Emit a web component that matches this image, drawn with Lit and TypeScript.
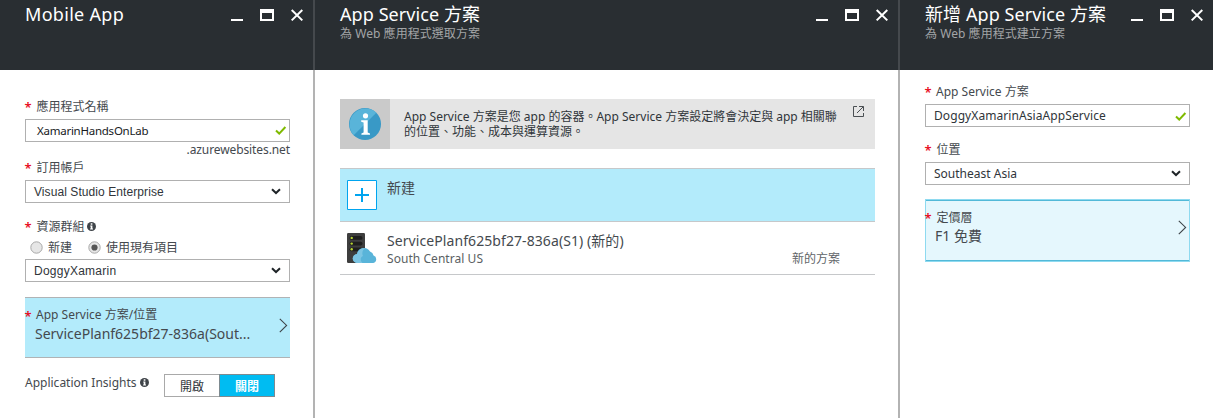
import { LitElement, html, css, svg } from "lit";
import { customElement, property } from "lit/decorators.js";

const shared = css`
  * { box-sizing: border-box; }
  svg { display: block; flex: none; }
`;

const infoDot = html`<svg class="dot" width="9" height="9" viewBox="0 0 9 9">
  <circle cx="4.5" cy="4.5" r="4.5" fill="#3f4449" />
  <path d="M3.7 1.3h1.7v1.5H3.7zM3.2 3.6h2.2v3h.6v.9H3.1v-.9h.6V4.5h-.5z" fill="#fff" />
</svg>`;
const check = html`<svg class="check" width="12" height="9" viewBox="0 0 12 9">
  <path d="M1 4.6 4.2 7.6 10.4 1" fill="none" stroke="#7fba00" stroke-width="2" />
</svg>`;
const caret = html`<svg width="10" height="7" viewBox="0 0 10 7">
  <path d="M1 1.2 5 5 9 1.2" fill="none" stroke="#1f2428" stroke-width="2" />
</svg>`;
const chevron = html`<svg class="chev" width="9" height="15" viewBox="0 0 9 15">
  <path d="M.8.8 7.6 7.4.8 14.1" fill="none" stroke="#3d4449" stroke-width="1.1" />
</svg>`;

@customElement("az-blade")
class AzBlade extends LitElement {
  @property() heading = "";
  @property() sub = "";
  static styles = [shared, css`
    :host { display: flex; flex-direction: column; height: 418px; min-width: 0; }
    .head { height: 70px; flex: none; background: #292e32; color: #fff; display: flex; padding-left: 25px; }
    .titles { flex: 1; white-space: nowrap; padding-top: 2px; }
    .title { font-size: 18px; line-height: 24px; height: 24px; letter-spacing: var(--title-spacing, 0.08px); }
    .sub { font-size: 12px; line-height: 16px; height: 16px; color: #a3a5a7; letter-spacing: 0.05px; }
    .body { padding: 0 23px 0 25px; display: flex; flex-direction: column; }
  `];
  render() {
    return html`
      <div class="head">
        <div class="titles">
          <div class="title">${this.heading}</div>
          <div class="sub">${this.sub}</div>
        </div>
        <svg width="83" height="70" viewBox="0 0 83 70" shape-rendering="crispEdges">
          <path d="M1 19h12v2H1z" fill="#fff" />
          <path d="M30 9h14v12H30zM32 13v6h10v-6z" fill="#fff" fill-rule="evenodd" />
          <path d="M61.7 10 72.3 20.4M72.3 10 61.7 20.4" stroke="#fff" stroke-width="2" shape-rendering="auto" />
        </svg>
      </div>
      <div class="body"><slot></slot></div>
    `;
  }
}

@customElement("app-root")
class AppRoot extends LitElement {
  static styles = [shared, css`
    :host {
      display: block; width: 1213px; height: 418px; overflow: hidden; background: #fff;
      font-family: "Noto Sans", "Noto Sans CJK TC", sans-serif; font-size: 12px; color: #44494e;
    }
    .page { display: grid; grid-template-columns: 313px 2px 583px 2px 313px; }
    .rule { height: 418px; background: linear-gradient(#45494d 70px, #b3b3b3 70px); }
    .first { --title-spacing: 0.3px; }
    .label { height: 18px; line-height: 18px; display: flex; align-items: center; white-space: nowrap; margin-bottom: 4px; }
    .label .text { padding-top: 2px; }
    .star { color: #e81123; width: 12px; flex: none; font-size: 13px; font-weight: 600; margin-left: -0.5px; padding-top: 1px; }
    .label.latin .star { width: 11.500px; }
    .field { height: 23px; border: 1px solid #b0b0b0; display: flex; align-items: center; justify-content: space-between; padding: 0 2px 0 11px; color: #16191c; white-space: nowrap; line-height: 21px; }
    .host-name { font-size: 11.5px; letter-spacing: -0.25px; }
    .select { padding: 0 8px 0 8px; color: #30353a; }
    .select.ok { padding-right: 2px; letter-spacing: 0.08px; }
    .select.ok .check { margin-top: 2px; }
    .arial { font-family: "Liberation Sans", sans-serif; letter-spacing: 0.08px; }
    .arial span { padding-top: 1px; }
    .arial .wide { letter-spacing: 0.25px; }
    .t1 { padding-top: 27px; }
    .suffix { height: 16px; line-height: 16px; text-align: right; letter-spacing: -0.1px; }
    .gap14 { margin-top: 14px; }
    .gap13 { margin-top: 13px; }
    .dot { margin-left: 3px; }
    .label .dot { margin-left: 2px; }
    .radios { display: flex; align-items: center; height: 20px; margin: -2px 0 2px 5px; }
    .radios span { margin: 0 17px 0 5px; }
    .radios span.near { margin-right: 16px; }
    .tile { margin-top: 15px; height: 61px; background: #b3ebfb; border: solid #b0b3b5; border-width: 1px 0; display: flex; align-items: flex-start; padding-top: 8px; }
    .tile .grow { flex: 1; white-space: nowrap; }
    .tile .label { margin: 0; }
    .tile .label.latin .text { padding-top: 0; }
    .big { font-size: 14px; line-height: 19px; padding-left: 10px; }
    .chev { margin: 12px 2px 0 0; }
    .insights { display: flex; height: 23px; margin-top: 16px; }
    .insights .name { width: 139px; height: 17px; display: flex; align-items: center; white-space: nowrap; }
    .seg { width: 56px; border: 1px solid #a9a9a9; display: flex; justify-content: center; align-items: center; color: #30353a; }
    .seg.on { background: #00bcf2; border-color: #7d8a90; color: #fff; font-weight: 700; margin-left: -1px; }
    .info { margin-top: 29px; height: 50px; background: #e5e5e5; display: flex; color: #30353a; }
    .info .pic { width: 50px; background: #cacaca; display: flex; justify-content: center; align-items: center; }
    .info .txt { padding: 10px 0 0 14px; line-height: 15px; white-space: nowrap; width: 463px; }
    .info .out { margin-top: 7px; }
    .list { margin-top: 19px; border-top: 1px solid #c6c8ca; }
    .row { height: 53px; border-bottom: 1px solid #c6c8ca; display: flex; padding: 11px 35px 0 7px; }
    .row.sel { background: #b3ebfb; }
    .row .main { margin-left: 10px; flex: 1; }
    .row .name { font-size: 14px; line-height: 18px; margin-top: -1px; letter-spacing: 0.08px; }
    .row .loc { line-height: 18px; color: #5a5f63; letter-spacing: 0.05px; }
    .row .right { margin-top: 17px; line-height: 18px; color: #5f6468; }
    .t3 { padding-top: 12px; }
    .tile.pale { margin-top: 14px; height: 63px; background: #e5f7fd; border: 1px solid #8edaf0; box-shadow: inset 0 1px #52b9d8, inset 0 -1px #52b9d8; padding-top: 8px; }
    .pale .star { margin-left: -1.5px; }
    .pale .big { padding-left: 9px; }
    .pale .chev { margin-right: 2px; margin-top: 12px; }
  `];
  label(text: string, extra: unknown = "") {
    return html`<div class="label ${text.startsWith("App") ? "latin" : ""}"><span class="star">*</span><span class="text">${text}</span>${extra}</div>`;
  }
  radio(on: boolean) {
    return html`<svg width="13" height="13" viewBox="0 0 13 13">
      <circle cx="6.5" cy="6.5" r="5.7" fill="#e6e6e6" stroke="#a8a8a8" />
      ${on ? svg`<circle cx="6.5" cy="6.5" r="3.1" fill="#555" />` : ""}
    </svg>`;
  }
  render() {
    return html`<div class="page">
      <az-blade class="first" heading="Mobile App">
        <div class="t1"></div>
        ${this.label("應用程式名稱")}
        <div class="field"><span class="host-name">XamarinHandsOnLab</span>${check}</div>
        <div class="suffix"><span>.azurewebsites.net</span></div>
        ${this.label("訂用帳戶")}
        <div class="field select arial"><span>Visual Studio Enterprise</span>${caret}</div>
        <div class="gap14"></div>
        ${this.label("資源群組", infoDot)}
        <div class="radios">${this.radio(false)}<span class="near">新建</span>${this.radio(true)}<span>使用現有項目</span></div>
        <div class="field select arial"><span class="wide">DoggyXamarin</span>${caret}</div>
        <div class="tile">
          <div class="grow">${this.label("App Service 方案/位置")}<div class="big">ServicePlanf625bf27-836a(Sout...</div></div>
          ${chevron}
        </div>
        <div class="insights">
          <div class="name"><span>Application Insights</span>${infoDot}</div>
          <div class="seg">開啟</div><div class="seg on">關閉</div>
        </div>
      </az-blade>
      <div class="rule"></div>
      <az-blade heading="App Service 方案" sub="為 Web 應用程式選取方案">
        <div class="info">
          <div class="pic"><svg width="32" height="32" viewBox="0 0 32 32">
            <circle cx="16" cy="16" r="16" fill="#3999c6" />
            <path d="M4.7 27.3A16 16 0 0 1 27.3 4.7z" fill="#59b4d9" />
            <circle cx="16.5" cy="7.8" r="2.6" fill="#fff" />
            <path d="M12.2 12.3h6.5v12.3l2.3.8v1.4h-8.600v-1.400l2.200-.8V14.600l-2.400-.8z" fill="#fff" />
          </svg></div>
          <div class="txt">App Service 方案是您 app 的容器。App Service 方案設定將會決定與 app 相關聯<br />的位置、功能、成本與運算資源。</div>
          <svg class="out" width="11" height="11" viewBox="0 0 11 11">
            <path d="M4 .5H.5v10h10V7M6 .5h4.500V5M10.300.700 4 7" fill="none" stroke="#4a4f53" />
          </svg>
        </div>
        <div class="list">
          <div class="row sel">
            <svg width="30" height="30" viewBox="0 0 30 30">
              <path d="M.5.5h29v29H.5z" fill="#fff" stroke="#00a4ef" />
              <path d="M15 8v14M8 15h14" stroke="#00a4ef" stroke-width="2" />
            </svg>
            <div class="main"><div class="name">新建</div></div>
          </div>
          <div class="row">
            <svg width="30" height="30" viewBox="0 0 30 30">
              <rect width="18" height="30" rx="1.200" fill="#3e3e3e" />
              <g fill="#1e1e1e"><rect x="2.500" y="3" width="13" height="3.800" rx="1.900" /><rect x="2.500" y="8.700" width="13" height="3.800" rx="1.900" /><rect x="2.500" y="14.400" width="13" height="3.800" rx="1.900" /></g>
              <g fill="#b8d432"><circle cx="4.700" cy="4.900" r="1.200" /><circle cx="4.700" cy="10.600" r="1.200" /><circle cx="4.700" cy="16.300" r="1.200" /></g>
              <path d="M10.500 30a4.500 4.500 0 0 1-.5-9 7 7 0 0 1 13-2.500 5 5 0 0 1 3.500 4A3.900 3.900 0 0 1 26.300 30z" fill="#59b4d9" />
              <path d="M10.500 30a4.500 4.500 0 0 1-.5-9 7 7 0 0 1 8.300-5.700c-3 1.500-3.600 5-2.300 7.700-2.500.5-3.300 4.500-.5 7z" fill="#7cc5e3" />
            </svg>
            <div class="main"><div class="name"><span>ServicePlanf625bf27-836a(S1) (新的)</span></div><div class="loc">South Central US</div></div>
            <div class="right">新的方案</div>
          </div>
        </div>
      </az-blade>
      <div class="rule"></div>
      <az-blade heading="新增 App Service 方案" sub="為 Web 應用程式建立方案">
        <div class="t3"></div>
        ${this.label("App Service 方案")}
        <div class="field select ok"><span>DoggyXamarinAsiaAppService</span>${check}</div>
        <div class="gap13"></div>
        ${this.label("位置")}
        <div class="field select"><span>Southeast Asia</span>${caret}</div>
        <div class="tile pale">
          <div class="grow">${this.label("定價層")}<div class="big">F1 免費</div></div>
          ${chevron}
        </div>
      </az-blade>
    </div>`;
  }
}
